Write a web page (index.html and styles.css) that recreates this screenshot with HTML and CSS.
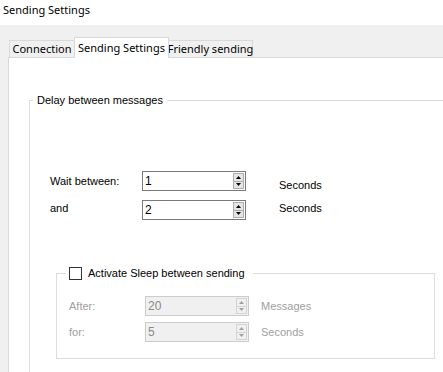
FILE: index.html
```html
<!DOCTYPE html>
<html>
<head>
<meta charset="utf-8">
<link rel="stylesheet" href="styles.css">
</head>
<body>
<div class="window">
  <div class="titlebar">Sending Settings</div>
  <div class="client">
    <div class="tabstrip">
      <div class="tab tab-connection">Connection</div>
      <div class="tab tab-sending active">Sending Settings</div>
      <div class="tab tab-friendly">Friendly sending</div>
    </div>
    <div class="panel">
      <fieldset class="group delay">
        <legend class="legend">Delay between messages</legend>
        <div class="rows delay-rows">
          <span class="label">Wait between:</span>
          <div class="spin">
            <span class="spin-value">1</span>
            <div class="spin-buttons">
              <span class="spin-btn"><svg width="5" height="3" viewBox="0 0 5 3"><path d="M0 3 L2.5 0 L5 3 Z"/></svg></span>
              <span class="spin-btn"><svg width="5" height="3" viewBox="0 0 5 3"><path d="M0 0 L5 0 L2.5 3 Z"/></svg></span>
            </div>
          </div>
          <span class="unit unit-low">Seconds</span>

          <span class="label label-high">and</span>
          <div class="spin">
            <span class="spin-value">2</span>
            <div class="spin-buttons">
              <span class="spin-btn"><svg width="5" height="3" viewBox="0 0 5 3"><path d="M0 3 L2.5 0 L5 3 Z"/></svg></span>
              <span class="spin-btn"><svg width="5" height="3" viewBox="0 0 5 3"><path d="M0 0 L5 0 L2.5 3 Z"/></svg></span>
            </div>
          </div>
          <span class="unit unit-high">Seconds</span>
        </div>

        <fieldset class="group sleep">
          <legend class="legend check-legend"><span class="checkbox"></span>Activate Sleep between sending</legend>
          <div class="rows sleep-rows">
            <span class="label disabled">After:</span>
            <div class="spin disabled">
              <span class="spin-value">20</span>
              <div class="spin-buttons">
                <span class="spin-btn"><svg width="5" height="3" viewBox="0 0 5 3"><path d="M0 3 L2.5 0 L5 3 Z"/></svg></span>
                <span class="spin-btn"><svg width="5" height="3" viewBox="0 0 5 3"><path d="M0 0 L5 0 L2.5 3 Z"/></svg></span>
              </div>
            </div>
            <span class="unit disabled">Messages</span>

            <span class="label disabled">for:</span>
            <div class="spin disabled">
              <span class="spin-value">5</span>
              <div class="spin-buttons">
                <span class="spin-btn"><svg width="5" height="3" viewBox="0 0 5 3"><path d="M0 3 L2.5 0 L5 3 Z"/></svg></span>
                <span class="spin-btn"><svg width="5" height="3" viewBox="0 0 5 3"><path d="M0 0 L5 0 L2.5 3 Z"/></svg></span>
              </div>
            </div>
            <span class="unit disabled">Seconds</span>
          </div>
        </fieldset>
      </fieldset>
    </div>
  </div>
</div>
</body>
</html>
```

FILE: styles.css
```css
html, body {
  margin: 0;
  padding: 0;
  overflow: hidden;
  background: #ffffff;
}

.window {
  width: 480px;
  height: 372px;
  display: flex;
  flex-direction: column;
  font-family: "Liberation Sans", Arial, sans-serif;
  font-size: 11px;
  color: #000000;
  overflow: hidden;
}

.titlebar {
  flex-shrink: 0;
  height: 25px;
  background: #ffffff;
  padding-left: 3px;
  line-height: 20px;
  font-family: "Noto Sans", "Open Sans", sans-serif;
  font-size: 11px;
  color: #000000;
}

.client {
  flex: 1;
  min-height: 0;
  background: #f0f0f0;
  padding: 12px 0 0 8px;
  display: flex;
  flex-direction: column;
}

.tabstrip {
  flex-shrink: 0;
  display: flex;
  align-items: flex-end;
  height: 20px;
  padding-left: 1px;
  font-family: "Noto Sans", "Open Sans", sans-serif;
  font-size: 11px;
}

.tab {
  box-sizing: border-box;
  height: 17px;
  border: 1px solid #d9d9d9;
  border-bottom: none;
  background: #f0f0f0;
  display: flex;
  align-items: center;
  justify-content: center;
  white-space: nowrap;
  line-height: 14px;
}

.tab-connection { width: 65px; border-right: none; }
.tab-sending { width: 95px; }
.tab-friendly { width: 84px; border-left: none; }

.tab.active {
  height: 21px;
  margin-bottom: -1px;
  background: #ffffff;
  position: relative;
  z-index: 1;
  padding-bottom: 1px;
}

.panel {
  flex: 1;
  min-height: 0;
  overflow: hidden;
  background: #ffffff;
  border-top: 1px solid #d9d9d9;
  border-left: 1px solid #d9d9d9;
}

.group {
  margin: 0;
  padding: 0;
  min-inline-size: 0;
  border: 1px solid #dcdcdc;
}

.legend {
  line-height: 14px;
  height: 14px;
  white-space: nowrap;
}

.delay {
  margin: 35px 0 0 20px;
  width: 460px;
  padding: 0 0 0 20px;
  border-bottom: none;
  height: 300px;
  box-sizing: border-box;
}

.delay > .legend {
  margin-left: -17px;
  padding: 0 4px;
}

.rows {
  display: grid;
  align-items: center;
  column-gap: 0;
}

.delay-rows {
  grid-template-columns: 92px 104px auto;
  row-gap: 9px;
  grid-auto-rows: 20px;
  margin-top: 64px;
}

.delay-rows .unit {
  margin-left: 33px;
}

.label, .unit {
  white-space: nowrap;
}

.unit-low { position: relative; top: 4px; }
.unit-high { position: relative; top: -2px; }
.label-high { position: relative; top: -2px; }

.spin {
  box-sizing: border-box;
  height: 20px;
  border: 1px solid #7a7a7a;
  background: #ffffff;
  display: flex;
  align-items: center;
  justify-content: space-between;
  padding: 1px 1px 1px 2px;
}

.spin-value {
  font-size: 12px;
  line-height: 14px;
}

.spin-buttons {
  display: flex;
  flex-direction: column;
  height: 100%;
  width: 11px;
}

.spin-btn {
  flex: 1;
  box-sizing: border-box;
  border: 1px solid #adadad;
  background: #e5e5e5;
  display: flex;
  align-items: center;
  justify-content: center;
}

.spin-btn + .spin-btn {
  border-top: none;
}

.spin-btn svg {
  display: block;
  fill: #000000;
}

.sleep {
  margin: 46px 0 0 6px;
  width: 379px;
  box-sizing: border-box;
  padding: 0 0 16px 12px;
}

.check-legend {
  margin-left: -3px;
  padding: 0 8px 0 3px;
  display: flex;
  align-items: center;
}

.checkbox {
  box-sizing: border-box;
  width: 13px;
  height: 13px;
  border: 1px solid #333333;
  background: #ffffff;
  margin-right: 6px;
}

.sleep-rows {
  grid-template-columns: 76px 104px auto;
  row-gap: 6px;
  grid-auto-rows: 20px;
  margin-top: 16px;
}

.sleep-rows .unit {
  margin-left: 12px;
}

.disabled {
  color: #a0a0a0;
}

.spin.disabled {
  border-color: #cccccc;
  background: #f0f0f0;
  color: #8a8a8a;
}

.spin.disabled .spin-btn {
  border-color: #d4d4d4;
  background: #f0f0f0;
}

.spin.disabled .spin-btn svg {
  fill: #a0a0a0;
}
```
